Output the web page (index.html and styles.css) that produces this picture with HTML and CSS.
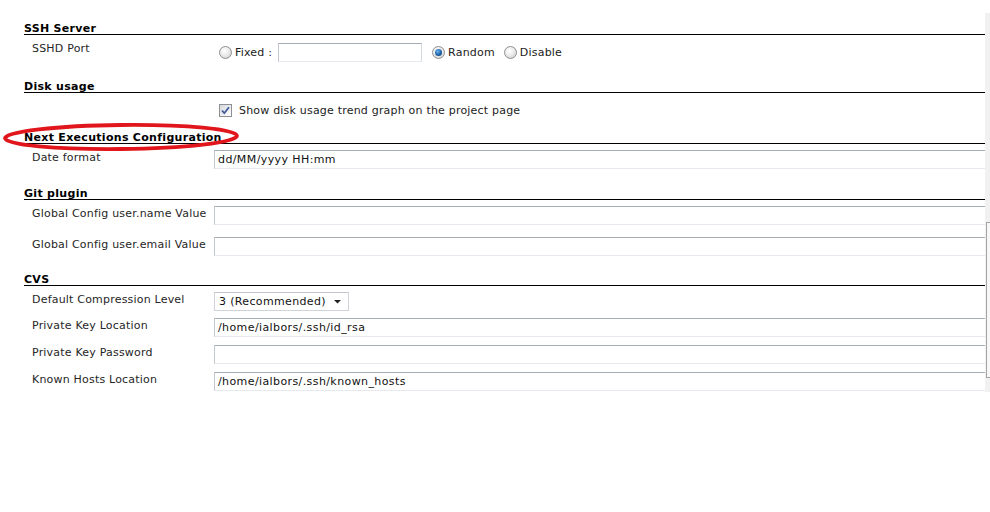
FILE: index.html
```html
<!DOCTYPE html>
<html>
<head>
<meta charset="utf-8">
<link rel="stylesheet" href="styles.css">
</head>
<body>
<div class="page">
  <div class="main">
    <div class="section first">
      <div class="sec-head">SSH Server</div>
      <div class="row row-ssh">
        <div class="label">SSHD Port</div>
        <div class="ctrl radios">
          <span class="radio r1"></span><span class="rtext">Fixed :</span>
          <span class="input fixed"></span>
          <span class="radio r2 on"></span><span class="rtext">Random</span>
          <span class="radio r3"></span><span class="rtext">Disable</span>
        </div>
      </div>
    </div>

    <div class="section s-disk">
      <div class="sec-head">Disk usage</div>
      <div class="row row-disk">
        <div class="label"></div>
        <div class="ctrl check">
          <span class="checkbox"><svg width="13" height="13" viewBox="0 0 13 13"><path d="M3 6.5 L5.3 9.2 L10 3.2" fill="none" stroke="#3f5a96" stroke-width="1.8"/></svg></span>
          <span class="ctext">Show disk usage trend graph on the project page</span>
        </div>
      </div>
    </div>

    <div class="section s-next">
      <div class="sec-head">Next Executions Configuration</div>
      <div class="row r6">
        <div class="label">Date format</div>
        <div class="ctrl"><span class="input full">dd/MM/yyyy HH:mm</span></div>
      </div>
    </div>

    <div class="section s-git">
      <div class="sec-head">Git plugin</div>
      <div class="row r6">
        <div class="label">Global Config user.name Value</div>
        <div class="ctrl"><span class="input full"></span></div>
      </div>
      <div class="row r12">
        <div class="label">Global Config user.email Value</div>
        <div class="ctrl"><span class="input full"></span></div>
      </div>
    </div>

    <div class="section s-cvs">
      <div class="sec-head">CVS</div>
      <div class="row r6">
        <div class="label">Default Compression Level</div>
        <div class="ctrl"><span class="select">3 (Recommended)<svg class="arrow" width="7" height="5" viewBox="0 0 7 5"><path d="M0 1 L7 1 L3.5 4.5 Z" fill="#222"/></svg></span></div>
      </div>
      <div class="row r7">
        <div class="label">Private Key Location</div>
        <div class="ctrl"><span class="input full">/home/ialbors/.ssh/id_rsa</span></div>
      </div>
      <div class="row r8">
        <div class="label">Private Key Password</div>
        <div class="ctrl"><span class="input full"></span></div>
      </div>
      <div class="row r8">
        <div class="label">Known Hosts Location</div>
        <div class="ctrl"><span class="input full">/home/ialbors/.ssh/known_hosts</span></div>
      </div>
    </div>
  </div>
  <div class="edge"><div class="thumb"></div></div>

  <svg class="annot" width="250" height="40" viewBox="0 0 250 40">
    <ellipse cx="121" cy="16" rx="116" ry="12" fill="none" stroke="#e0161c" stroke-width="3.8" transform="rotate(-0.6 121 16)"/>
  </svg>
</div>
</body>
</html>
```

FILE: styles.css
```css
html, body {
  margin: 0;
  padding: 0;
  background: #fff;
}
body {
  font-family: "DejaVu Sans", Verdana, sans-serif;
  font-size: 11px;
  letter-spacing: 0.2px;
  color: #222;
}
.page {
  position: relative;
  display: flex;
  width: 990px;
  height: 512px;
}
.main {
  width: 961px;
  margin-left: 24px;
  padding-top: 21px;
}
.sec-head {
  font-weight: bold;
  color: #000;
  letter-spacing: 0.3px;
  line-height: 13px;
  padding-top: 1px;
  height: 12px;
  border-bottom: 1px solid #000;
}
.s-disk { margin-top: 17px; }
.s-next { margin-top: 10px; }
.s-git { margin-top: 17px; }
.s-cvs { margin-top: 16px; }

.row {
  display: grid;
  grid-template-columns: 182px 1fr;
  margin-left: 8px;
}
.r6 { margin-top: 6px; }
.r7 { margin-top: 7px; }
.r8 { margin-top: 8px; }
.r12 { margin-top: 12px; }
.label {
  line-height: 14px;
  padding-top: 1px;
  color: #262626;
  white-space: nowrap;
}
.ctrl {
  display: flex;
  align-items: center;
  min-width: 0;
}
.row-ssh { margin-top: 5px; }
.row-ssh .label { padding-top: 2px; }
.row-ssh .ctrl { margin-top: 3px; height: 19px; }
.row-disk { margin-top: 8px; }
.row-disk .ctrl { height: 19px; }

.input {
  box-sizing: border-box;
  display: block;
  height: 19px;
  line-height: 17px;
  padding-left: 3px;
  border: 1px solid #d5d9e0;
  border-top-color: #a6adb6;
  border-left-color: #c3c8cf;
  border-bottom-color: #e6eaef;
  background: #fff;
  color: #111;
  letter-spacing: 0.4px;
  white-space: nowrap;
  overflow: hidden;
}
.input.full { width: 100%; border-right: none; }
.input.fixed { width: 144px; margin-left: 6px; }

.radio {
  box-sizing: border-box;
  display: block;
  width: 13px;
  height: 13px;
  border-radius: 50%;
  border: 1px solid #8d8f94;
  background: radial-gradient(circle at 40% 35%, #ffffff 0%, #ececec 45%, #c9c9c9 100%);
  flex: none;
  position: relative;
}
.radio.on::after {
  content: "";
  position: absolute;
  left: 2px;
  top: 2px;
  width: 7px;
  height: 7px;
  border-radius: 50%;
  background: radial-gradient(circle at 40% 35%, #6fb5f0 0%, #1c5fa8 55%, #0d3a70 100%);
}
.r1 { margin-left: 5px; }
.r2 { margin-left: 10px; }
.r3 { margin-left: 9px; }
.rtext { margin-left: 3px; color: #222; }

.checkbox {
  box-sizing: border-box;
  display: block;
  width: 13px;
  height: 13px;
  margin-left: 5px;
  border: 1px solid #8d8f94;
  background: linear-gradient(135deg, #d6d8dd 0%, #f4f4f6 70%, #ffffff 100%);
  flex: none;
}
.checkbox svg { display: block; margin: -1px 0 0 -1px; }
.ctext { margin-left: 7px; color: #222; }

.select {
  box-sizing: border-box;
  display: flex;
  align-items: center;
  width: 135px;
  height: 19px;
  padding-left: 4px;
  border: 1px solid #d0d3d8;
  border-top-color: #c2c6cc;
  background: #fff;
  color: #111;
  letter-spacing: 0.35px;
  white-space: nowrap;
}
.select .arrow { margin-left: 8px; }

.edge {
  width: 5px;
  margin-top: 13px;
  height: 379px;
  background: #f1f1f1;
}
.thumb {
  margin-top: 209px;
  height: 154px;
  margin-left: 1px;
  border: 1px solid #a4a4a4;
  border-right: none;
  background: #f7f7f7;
}

.annot {
  position: absolute;
  left: 0;
  top: 121px;
  pointer-events: none;
}
```
